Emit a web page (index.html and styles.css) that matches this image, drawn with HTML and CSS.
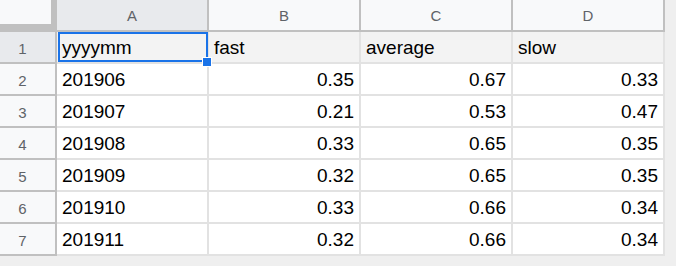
FILE: index.html
```html
<!DOCTYPE html>
<html>
<head>
<meta charset="utf-8">
<link rel="stylesheet" href="styles.css">
</head>
<body>
<div class="sheet">
  <div class="corner"><div class="corner-inner"></div></div>
  <div class="colhead active">A</div>
  <div class="colhead">B</div>
  <div class="colhead">C</div>
  <div class="colhead">D</div>

  <div class="rowhead active">1</div>
  <div class="cell first selected">yyyymm</div>
  <div class="cell first">fast</div>
  <div class="cell first">average</div>
  <div class="cell first">slow</div>

  <div class="rowhead">2</div>
  <div class="cell">201906</div>
  <div class="cell num">0.35</div>
  <div class="cell num">0.67</div>
  <div class="cell num">0.33</div>

  <div class="rowhead">3</div>
  <div class="cell">201907</div>
  <div class="cell num">0.21</div>
  <div class="cell num">0.53</div>
  <div class="cell num">0.47</div>

  <div class="rowhead">4</div>
  <div class="cell">201908</div>
  <div class="cell num">0.33</div>
  <div class="cell num">0.65</div>
  <div class="cell num">0.35</div>

  <div class="rowhead">5</div>
  <div class="cell">201909</div>
  <div class="cell num">0.32</div>
  <div class="cell num">0.65</div>
  <div class="cell num">0.35</div>

  <div class="rowhead">6</div>
  <div class="cell">201910</div>
  <div class="cell num">0.33</div>
  <div class="cell num">0.66</div>
  <div class="cell num">0.34</div>

  <div class="rowhead">7</div>
  <div class="cell">201911</div>
  <div class="cell num">0.32</div>
  <div class="cell num">0.66</div>
  <div class="cell num">0.34</div>
</div>
</body>
</html>
```

FILE: styles.css
```css
html, body {
  margin: 0;
  padding: 0;
  background: #efefef;
  width: 676px;
  height: 266px;
  overflow: hidden;
}

.sheet {
  display: grid;
  grid-template-columns: 57px repeat(4, 152px);
  grid-auto-rows: 32px;
  font-family: "Liberation Sans", Arial, sans-serif;
}

.corner {
  background: #c0c0c0;
  box-sizing: border-box;
}

.corner-inner {
  width: 51px;
  height: 24px;
  background: #f8f9fa;
}

.colhead {
  box-sizing: border-box;
  background: #f8f9fa;
  border-right: 2px solid #c0c0c0;
  border-bottom: 2px solid #c0c0c0;
  color: #5f6368;
  font-size: 15px;
  display: flex;
  align-items: center;
  justify-content: center;
  padding-top: 1px;
}

.colhead.active {
  background: #e8eaed;
}

.rowhead {
  box-sizing: border-box;
  background: #f8f9fa;
  border-right: 2px solid #c0c0c0;
  border-bottom: 2px solid #c0c0c0;
  color: #5f6368;
  font-size: 15px;
  display: flex;
  align-items: center;
  justify-content: center;
  padding-right: 10px;
  padding-top: 2px;
}

.rowhead.active {
  background: #e8eaed;
}

.cell {
  box-sizing: border-box;
  position: relative;
  background: #ffffff;
  border-right: 2px solid #e2e2e2;
  border-bottom: 2px solid #e2e2e2;
  color: #000;
  font-size: 19px;
  line-height: 28px;
  padding: 2px 5px 0 5px;
  white-space: nowrap;
  overflow: visible;
}

.cell.first {
  background: #f3f3f3;
}

.cell.num {
  text-align: right;
}

.cell.selected::before {
  content: "";
  position: absolute;
  top: 0;
  left: 1px;
  right: -1px;
  bottom: 0;
  border: 2px solid #1a73e8;
  pointer-events: none;
}

.cell.selected::after {
  content: "";
  position: absolute;
  right: -5px;
  bottom: -5px;
  width: 8px;
  height: 8px;
  background: #1a73e8;
  border: 1px solid #ffffff;
  z-index: 2;
}
```
